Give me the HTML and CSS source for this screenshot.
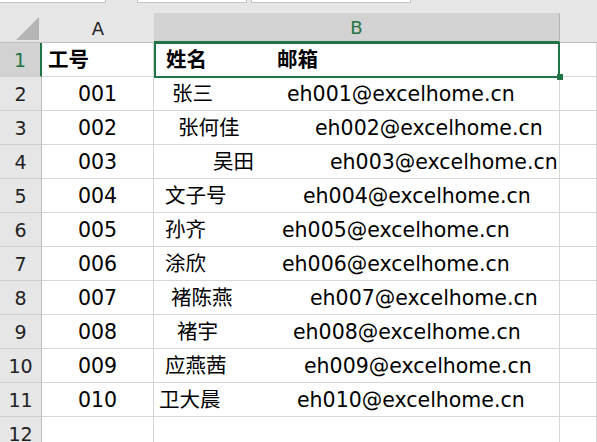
FILE: index.html
```html
<!DOCTYPE html>
<html lang="zh-CN">
<head>
    <meta charset="UTF-8">
    <title>工号表</title>
    <link rel="stylesheet" href="styles.css">
</head>
<body>
    <div class="tabs">
        <div class="tab t1"></div>
        <div class="tab t2"></div>
        <div class="tab t3"></div>
    </div>

    <div class="sheet">
        <!-- 列标题 -->
        <div class="corner"><span class="tri"></span></div>
        <div class="ch">A</div>
        <div class="ch on">B</div>
        <div class="ch rest"></div>

        <div class="rh on">1</div>
        <div class="c a head">工号</div>
        <div class="c b r1 sel"><span class="nm">姓名</span><span>邮箱</span></div>
        <div class="c"></div>

        <div class="rh">2</div>
        <div class="c a">001</div>
        <div class="c b r2"><span class="nm">张三</span><span>eh001@excelhome.cn</span></div>
        <div class="c"></div>

        <div class="rh">3</div>
        <div class="c a">002</div>
        <div class="c b r3"><span class="nm">张何佳</span><span>eh002@excelhome.cn</span></div>
        <div class="c"></div>

        <div class="rh">4</div>
        <div class="c a">003</div>
        <div class="c b r4"><span class="nm">吴田</span><span>eh003@excelhome.cn</span></div>
        <div class="c"></div>

        <div class="rh">5</div>
        <div class="c a">004</div>
        <div class="c b r5"><span class="nm">文子号</span><span>eh004@excelhome.cn</span></div>
        <div class="c"></div>

        <div class="rh">6</div>
        <div class="c a">005</div>
        <div class="c b r6"><span class="nm">孙齐</span><span>eh005@excelhome.cn</span></div>
        <div class="c"></div>

        <div class="rh">7</div>
        <div class="c a">006</div>
        <div class="c b r7"><span class="nm">涂欣</span><span>eh006@excelhome.cn</span></div>
        <div class="c"></div>

        <div class="rh">8</div>
        <div class="c a">007</div>
        <div class="c b r8"><span class="nm">褚陈燕</span><span>eh007@excelhome.cn</span></div>
        <div class="c"></div>

        <div class="rh">9</div>
        <div class="c a">008</div>
        <div class="c b r9"><span class="nm">褚宇</span><span>eh008@excelhome.cn</span></div>
        <div class="c"></div>

        <div class="rh">10</div>
        <div class="c a">009</div>
        <div class="c b r10"><span class="nm">应燕茜</span><span>eh009@excelhome.cn</span></div>
        <div class="c"></div>

        <div class="rh">11</div>
        <div class="c a">010</div>
        <div class="c b r11"><span class="nm">卫大晨</span><span>eh010@excelhome.cn</span></div>
        <div class="c"></div>

        <div class="rh">12</div>
        <div class="c"></div>
        <div class="c"></div>
        <div class="c"></div>
    </div>
</body>
</html>
```

FILE: styles.css
```css
* {
    margin: 0;
    padding: 0;
    box-sizing: border-box;
}

html, body {
    width: 100%;
    height: 100%;
    overflow: hidden;
    background: #fff;
}

body {
    font-family: "DejaVu Sans", "Noto Sans CJK SC", sans-serif;
    color: #000;
}

/* 顶部残留的工具条 */
.tabs {
    height: 13px;
    background: #e6e6e6;
    display: flex;
}

.tab {
    height: 3px;
    background: #fff;
    border: 1px solid #c4c4c4;
    border-top: none;
}

.t1 { width: 107px; margin-left: -1px; }
.t2 { width: 110px; margin-left: 31px; }
.t3 { width: 160px; margin-left: 4px; }

/* 表格 */
.sheet {
    display: grid;
    grid-template-columns: 42px 112px 406px 1fr;
    grid-template-rows: 30px;
    grid-auto-rows: 34px;
}

.corner, .ch {
    background: #e6e6e6;
    border-bottom: 1px solid #bdbdbd;
}

.corner {
    position: relative;
}

.tri {
    position: absolute;
    left: 16px;
    top: 4px;
    width: 0;
    height: 0;
    border-left: 23px solid transparent;
    border-bottom: 23px solid #b4b4b4;
}

.ch {
    display: flex;
    align-items: center;
    justify-content: center;
    font-size: 18px;
    color: #222;
    padding-top: 1px;
}

.ch.on {
    background: #d2d2d2;
    color: #217346;
    border-right: 1px solid #b4b4b4;
    border-bottom: 2px solid #217346;
}

.rh {
    background: #e6e6e6;
    border-right: 1px solid #bdbdbd;
    border-bottom: 1px solid #d0d0d0;
    display: flex;
    align-items: center;
    justify-content: center;
    font-size: 19px;
    color: #222;
}

.rh.on {
    background: #d2d2d2;
    color: #217346;
    border-right: 2px solid #217346;
}

.c {
    border-right: 1px solid #d6d6d6;
    border-bottom: 1px solid #d6d6d6;
    display: flex;
    align-items: center;
    font-size: 20.5px;
    white-space: nowrap;
}

.c.a {
    justify-content: center;
}

.c.head {
    justify-content: flex-start;
    padding-left: 6px;
    padding-bottom: 4px;
    font-weight: bold;
}

/* 中文字形比数字偏低，往上提一点 */
.nm {
    display: inline-block;
    flex-shrink: 0;
    padding-bottom: 4px;
}

/* 每行姓名与邮箱的起始位置 */
.r1 .nm  { padding-left: 12px; width: 123px; }
.r2 .nm  { padding-left: 18px; width: 133px; }
.r3 .nm  { padding-left: 24px; width: 161px; }
.r4 .nm  { padding-left: 59px; width: 176px; }
.r5 .nm  { padding-left: 11px; width: 149px; }
.r6 .nm  { padding-left: 11px; width: 128px; }
.r7 .nm  { padding-left: 11px; width: 128px; }
.r8 .nm  { padding-left: 17px; width: 156px; }
.r9 .nm  { padding-left: 23px; width: 139px; }
.r10 .nm { padding-left: 11px; width: 150px; }
.r11 .nm { padding-left: 5px;  width: 143px; }

.r1 {
    font-weight: bold;
    padding-bottom: 4px;
}

.r1 .nm {
    padding-bottom: 0;
}

/* 选中单元格 B1 */
.sel {
    position: relative;
}

.sel::after {
    content: "";
    position: absolute;
    left: 0;
    top: -1px;
    right: -1px;
    bottom: -2px;
    border: 2px solid #217346;
}

.sel::before {
    content: "";
    position: absolute;
    right: -4px;
    bottom: -4px;
    width: 6px;
    height: 6px;
    background: #217346;
    z-index: 1;
}
```
